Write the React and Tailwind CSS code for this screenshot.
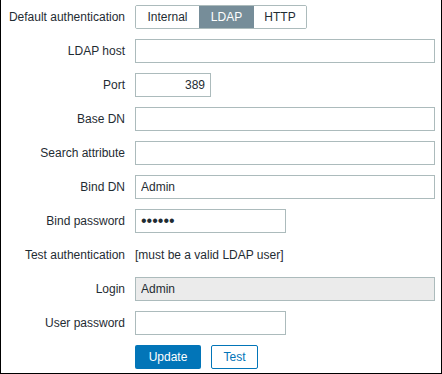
const font = { fontFamily: '"Liberation Sans", Arial, sans-serif' }

function Row({ label, children }) {
    return (
        <div className="flex items-center h-[24px] gap-[10px]">
            <div className="w-[124px] text-right text-[12px] text-[#1f2c33] whitespace-nowrap">{label}</div>
            <div className="flex items-center">{children}</div>
        </div>
    )
}

function Input({ width = 'w-[300px]', value = '', right, type = 'text', readOnly, size = 'text-[12px]' }) {
    return (
        <input
            type={type}
            defaultValue={value}
            readOnly={readOnly}
            className={`${width} h-[24px] border border-[#acbbbc] px-[5px] ${size} text-[#1f2c33] outline-none ${right ? 'text-right' : ''} ${readOnly ? 'bg-[#ebebeb]' : 'bg-white'}`}
            style={font}
        />
    )
}

export default function App() {
    return (
        <div className="w-[442px] h-[374px] bg-white border-l border-r border-b border-black pt-[5px]" style={font}>
            <div className="flex flex-col gap-[10px]">
                <Row label="Default authentication">
                    <div className="flex h-[24px] border border-[#acbbbc] rounded-[2px] overflow-hidden text-[12px]">
                        <div className="w-[63px] flex items-center justify-center text-[#1f2c33] bg-white">Internal</div>
                        <div className="w-[55px] flex items-center justify-center text-white bg-[#768d99]">LDAP</div>
                        <div className="w-[52px] flex items-center justify-center text-[#1f2c33] bg-white">HTTP</div>
                    </div>
                </Row>
                <Row label="LDAP host"><Input /></Row>
                <Row label="Port"><Input width="w-[76px]" value="389" right /></Row>
                <Row label="Base DN"><Input /></Row>
                <Row label="Search attribute"><Input /></Row>
                <Row label="Bind DN"><Input value="Admin" /></Row>
                <Row label="Bind password"><Input width="w-[151px]" value="secret" type="password" size="text-[16px]" /></Row>
                <Row label="Test authentication">
                    <span className="text-[12px] text-[#1f2c33]">[must be a valid LDAP user]</span>
                </Row>
                <Row label="Login"><Input value="Admin" readOnly /></Row>
                <Row label="User password"><Input width="w-[151px]" type="password" /></Row>
                <Row label="">
                    <div className="flex gap-[10px]">
                        <button className="w-[66px] h-[24px] rounded-[2px] bg-[#0275b8] text-white text-[12px]">Update</button>
                        <button className="w-[47px] h-[24px] rounded-[2px] border border-[#0275b8] bg-white text-[#0275b8] text-[12px]">Test</button>
                    </div>
                </Row>
            </div>
        </div>
    )
}
